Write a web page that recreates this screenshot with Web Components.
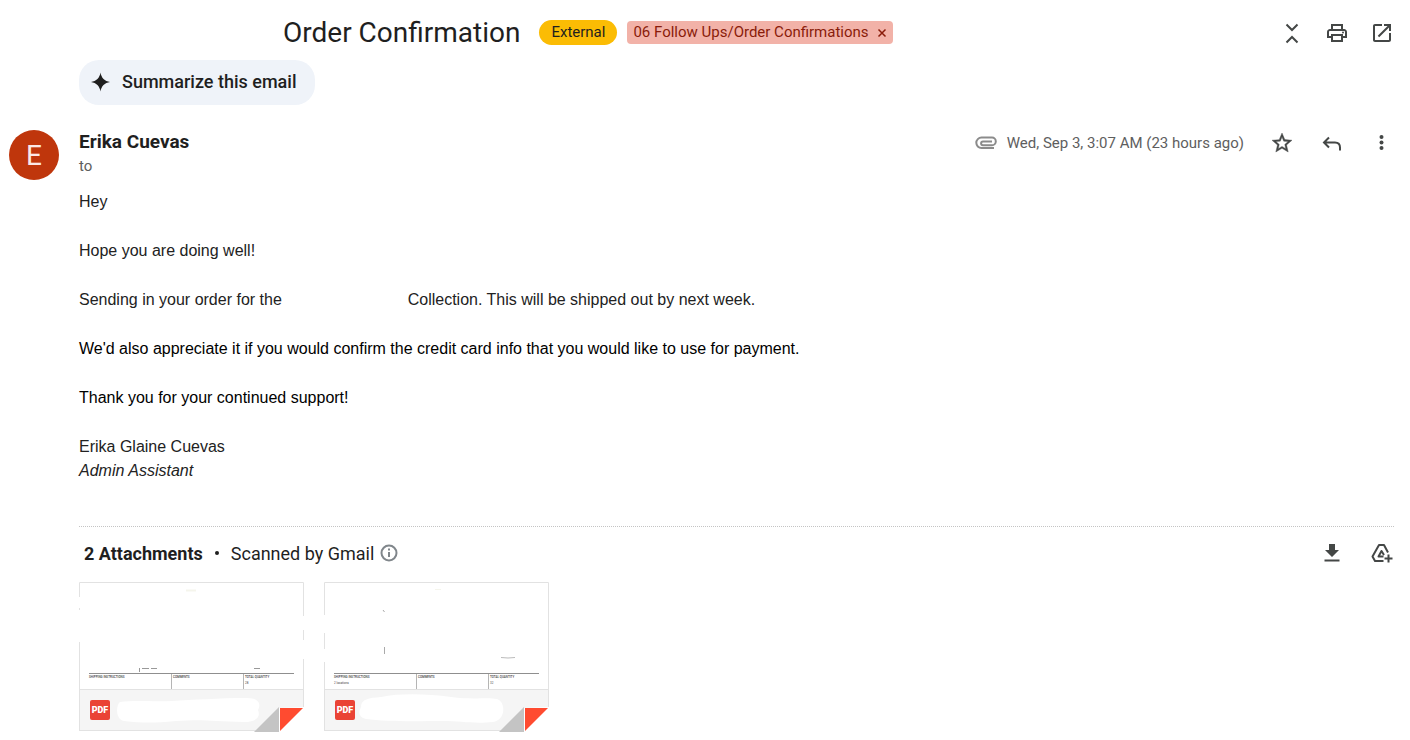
<!DOCTYPE html>
<html lang="en">
<head>
<meta charset="utf-8">
<meta name="viewport" content="width=device-width, initial-scale=1">
<title>Order Confirmation</title>
<style>
    :root {
        --text: #1f1f1f;
        --muted: #5e5e5e;
        --icon: #444746;
        --line: #e2e2e2;
    }

    body {
        margin: 0;
        background: #fff;
        color: var(--text);
        font-family: Roboto, "Liberation Sans", sans-serif;
        font-size: 16px;
    }
</style>
</head>
<body>

<mail-view>
    <mail-header slot="header">
        Order Confirmation
        <mail-tag slot="tags" kind="external">External</mail-tag>
        <mail-tag slot="tags" kind="label" removable>06 Follow Ups/Order Confirmations</mail-tag>
        <icon-button slot="actions" icon="collapse" label="Collapse all"></icon-button>
        <icon-button slot="actions" icon="print" label="Print all"></icon-button>
        <icon-button slot="actions" icon="open" label="In new window"></icon-button>
    </mail-header>

    <summary-chip slot="summary">Summarize this email</summary-chip>

    <mail-message>
        <span slot="initial">E</span>
        <span slot="sender">Erika Cuevas</span>
        <span slot="recipient">to</span>
        <span slot="date">Wed, Sep 3, 3:07 AM (23 hours ago)</span>
        <icon-button slot="actions" icon="star" label="Star"></icon-button>
        <icon-button slot="actions" icon="reply" label="Reply"></icon-button>
        <icon-button slot="actions" icon="more" label="More"></icon-button>
        <mail-body></mail-body>
    </mail-message>

    <attachment-list slot="attachments">
        <icon-button slot="actions" icon="download" label="Download all"></icon-button>
        <icon-button slot="actions" icon="drive" label="Add all to Drive"></icon-button>
        <attachment-card quantity="28" variant="first"></attachment-card>
        <attachment-card quantity="32" note="2 locations" variant="second"></attachment-card>
    </attachment-list>
</mail-view>

<script>
const icons = {
    collapse: '<path d="M6.5 3.5 12 9l5.500-5.500M6.500 21.500 12 16l5.500 5.500" fill="none" stroke="currentColor" stroke-width="2"/>',
    print: '<path d="M19 8h-1V3H6v5H5c-1.660 0-3 1.340-3 3v6h4v4h12v-4h4v-6c0-1.660-1.340-3-3-3zM8 5h8v3H8V5zm8 12v2H8v-4h8v2zm2-2v-2H6v2H4v-4c0-.55.45-1 1-1h14c.55 0 1 .45 1 1v4h-2z"/><circle cx="18" cy="11.500" r="1"/>',
    open: '<path d="M19 19H5V5h7V3H5c-1.110 0-2 .9-2 2v14c0 1.100.89 2 2 2h14c1.100 0 2-.9 2-2v-7h-2v7zM14 3v2h3.590l-9.830 9.830 1.410 1.410L19 6.410V10h2V3h-7z"/>',
    star: '<path d="M22 9.240l-7.190-.62L12 2 9.190 8.630 2 9.240l5.460 4.730L5.820 21 12 17.270 18.180 21l-1.630-7.030L22 9.240zM12 15.400l-3.760 2.270 1-4.280-3.320-2.880 4.380-.38L12 6.100l1.710 4.040 4.380.38-3.320 2.880 1 4.280L12 15.400z" stroke="currentColor" stroke-width=".4"/>',
    reply: '<path d="M9 6.500 4 11.500l5 5M4 11.500h11c3 0 5 1.800 5 5v3" fill="none" stroke="currentColor" stroke-width="2"/>',
    more: '<circle cx="11.500" cy="6" r="2"/><circle cx="11.500" cy="11.500" r="2"/><circle cx="11.500" cy="17" r="2"/>',
    download: '<path d="M9 3h6v6h4l-7 7-7-7h4zM4.500 18.500h15v2h-15z"/>',
    drive: '<path d="M13.500 20H5L2.500 15.500 9 4h5l4 7.500M13.500 15.500h-5L11.500 10l2.500 4" fill="none" stroke="currentColor" stroke-width="2" stroke-linejoin="round"/><path d="M18.500 13.500v8M14.500 17.500h8" fill="none" stroke="currentColor" stroke-width="2"/>'
}

function template(html) {
    const node = document.createElement('template')
    node.innerHTML = html
    return node
}

class BaseElement extends HTMLElement {
    constructor() {
        super()
        this.attachShadow({ mode: 'open' })
        this.shadowRoot.appendChild(this.constructor.template.content.cloneNode(true))
    }
}

class MailView extends BaseElement {
    static template = template(`
        <style>
            :host {
                display: block;
                padding: 10px 6px 8px 0;
            }

            .summary {
                margin: 5px 0 25px 79px;
            }

            .attachments {
                margin: 43px 0 0 79px;
            }
        </style>
        <slot name="header"></slot>
        <div class="summary"><slot name="summary"></slot></div>
        <main><slot></slot></main>
        <div class="attachments"><slot name="attachments"></slot></div>
    `)
}

class MailHeader extends BaseElement {
    static template = template(`
        <style>
            :host {
                display: flex;
                align-items: center;
                min-height: 45px;
                padding-left: 283px;
            }

            h1 {
                margin: 0 19px 0 0;
                font-size: 28px;
                font-weight: 400;
                line-height: 36px;
            }

            .tags {
                display: flex;
                align-items: center;
                gap: 10px;
            }

            .actions {
                display: flex;
                margin-left: auto;
            }
        </style>
        <h1><slot></slot></h1>
        <div class="tags"><slot name="tags"></slot></div>
        <div class="actions"><slot name="actions"></slot></div>
    `)
}

class MailTag extends BaseElement {
    static template = template(`
        <style>
            :host {
                display: flex;
                align-items: center;
                box-sizing: border-box;
                font-size: 15px;
                line-height: 23px;
                white-space: nowrap;
            }

            :host([kind="external"]) {
                padding: 1px 12px;
                border-radius: 13px;
                background: #fbbc04;
            }

            :host([kind="label"]) {
                padding: 0 6px;
                border-radius: 4px;
                background: #f2b2a8;
                color: #8a1c0a;
            }

            button {
                display: none;
                margin: 0 0 0 8px;
                padding: 0;
                border: 0;
                background: none;
                color: inherit;
                line-height: 0;
            }

            :host([removable]) button {
                display: block;
            }
        </style>
        <slot></slot>
        <button aria-label="Remove label">
            <svg width="10" height="10" viewBox="0 0 10 10"><path d="M1.500 1.500l7 7M8.500 1.500l-7 7" stroke="currentColor" stroke-width="1.500"/></svg>
        </button>
    `)
}

class IconButton extends BaseElement {
    static template = template(`
        <style>
            :host {
                display: block;
            }

            button {
                display: flex;
                align-items: center;
                justify-content: center;
                width: 45px;
                height: 45px;
                padding: 0;
                border: 0;
                border-radius: 50%;
                background: none;
                color: var(--icon);
                cursor: pointer;
            }

            button:hover {
                background: #f1f3f4;
            }
        </style>
        <button><svg width="24" height="24" viewBox="0 0 24 24" fill="currentColor"></svg></button>
    `)

    connectedCallback() {
        this.shadowRoot.querySelector('svg').innerHTML = icons[this.getAttribute('icon')]
        this.shadowRoot.querySelector('button').setAttribute('aria-label', this.getAttribute('label'))
    }
}

class SummaryChip extends BaseElement {
    static template = template(`
        <style>
            :host {
                display: block;
            }

            button {
                display: flex;
                align-items: center;
                gap: 12px;
                height: 45px;
                padding: 0 19px 2px 12px;
                border: 0;
                border-radius: 20px;
                background: #eff3f9;
                color: var(--text);
                font: 500 18px/24px Roboto, sans-serif;
            }
        </style>
        <button>
            <svg width="19" height="20" viewBox="0 0 20 20"><path d="M10 0c.8 5.600 4.400 9.200 10 10-5.600.8-9.200 4.400-10 10-.8-5.600-4.400-9.200-10-10 5.600-.8 9.200-4.400 10-10z" fill="currentColor"/></svg>
            <slot></slot>
        </button>
    `)
}

class MailMessage extends BaseElement {
    static template = template(`
        <style>
            :host {
                display: grid;
                grid-template-columns: 50px 1fr;
                column-gap: 20px;
                padding-left: 9px;
            }

            .avatar {
                display: flex;
                align-items: center;
                justify-content: center;
                width: 50px;
                height: 50px;
                border-radius: 50%;
                background: #bf360c;
                color: #fbe9e7;
                font-size: 28px;
            }

            .head {
                display: flex;
                height: 50px;
            }

            h2 {
                margin: 0;
                font-size: 19px;
                font-weight: 700;
                line-height: 24px;
            }

            .to {
                color: var(--muted);
                font-size: 15px;
                line-height: 25px;
            }

            .meta {
                display: flex;
                align-items: center;
                height: 25px;
                margin-left: auto;
                color: var(--muted);
                font-size: 15px;
            }

            .meta svg {
                margin-right: 10px;
            }

            .actions {
                display: flex;
                gap: 5px;
                margin-left: 15px;
            }

            .body {
                grid-column: 2;
                margin-top: 10px;
            }
        </style>
        <div class="avatar"><slot name="initial"></slot></div>
        <div class="head">
            <div>
                <h2><slot name="sender"></slot></h2>
                <div class="to"><slot name="recipient"></slot></div>
            </div>
            <div class="meta">
                <svg width="22" height="14" viewBox="0 0 22 14" fill="none" stroke="#8b8b8b" stroke-width="2"><path d="M19 12H6.500a5.200 5.200 0 0 1 0-10.400H17a3.800 3.800 0 0 1 0 7.600H8a1.900 1.900 0 0 1 0-3.800h9"/></svg>
                <slot name="date"></slot>
                <div class="actions"><slot name="actions"></slot></div>
            </div>
        </div>
        <div class="body"><slot></slot></div>
    `)
}

class MailBody extends BaseElement {
    static template = template(`
        <style>
            :host {
                display: block;
                color: #222;
                font-family: "Liberation Sans", Arial, sans-serif;
                font-size: 16px;
                line-height: 24px;
            }

            p {
                margin: 0 0 25px;
            }

            p:last-child {
                margin: 0;
            }

            .dark {
                color: #000;
            }

            .blank {
                display: inline-block;
                width: 117px;
            }
        </style>
        <p>Hey</p>
        <p>Hope you are doing well!</p>
        <p>Sending in your order for the <span class="blank"></span> Collection. This will be shipped out by next week.</p>
        <p class="dark">We'd also appreciate it if you would confirm the credit card info that you would like to use for payment.</p>
        <p class="dark">Thank you for your continued support!</p>
        <p>Erika Glaine Cuevas<br><i>Admin Assistant</i></p>
    `)
}

class AttachmentList extends BaseElement {
    static template = template(`
        <style>
            :host {
                display: block;
            }

            hr {
                margin: 0 10px 0 0;
                border: 0;
                border-top: 1px dotted #c4c4c4;
            }

            header {
                display: flex;
                align-items: center;
                height: 52px;
                padding-left: 5px;
                font-size: 18px;
            }

            h3 {
                margin: 0;
                font-size: 18px;
                font-weight: 700;
            }

            .dot {
                width: 4px;
                height: 4px;
                margin: 0 12px;
                border-radius: 50%;
                background: var(--text);
            }

            .info {
                margin-left: 6px;
            }

            .actions {
                display: flex;
                gap: 5px;
                margin-left: auto;
            }

            .cards {
                display: flex;
                flex-wrap: wrap;
                gap: 20px;
                margin-top: 3px;
            }
        </style>
        <hr>
        <header>
            <h3>2 Attachments</h3>
            <span class="dot"></span>
            <span>Scanned by Gmail</span>
            <svg class="info" width="18" height="18" viewBox="0 0 18 18" fill="none" stroke="#80868b" stroke-width="2"><circle cx="9" cy="9" r="7.500"/><path d="M9 8v5M9 4.500v2"/></svg>
            <div class="actions"><slot name="actions"></slot></div>
        </header>
        <div class="cards"><slot></slot></div>
    `)
}

// marks left on each page preview, and the open stretches of its frame
const previews = {
    first: `
        <path d="M.5 107V60M.5 26v2M.5 15V.5h224V34M224.500 48v10M224.500 77v30" stroke="#e2e2e2"/>
        <path d="M107 8.500h10" stroke="#f5f5ec" stroke-width="2"/>
        <path d="M60.500 86v4" stroke="#999"/>
        <path d="M63 86.500h7m2 0h6M175 86.500h6" stroke="#999"/>`,
    second: `
        <path d="M.5 107V80M.5 67V51M.5 33V.5h224V107" stroke="#e2e2e2"/>
        <path d="M111 7.500h6" stroke="#f5f5ec"/>
        <path d="M60.500 65v7M59 28l1.500 2" stroke="#aaa"/>
        <path d="M177 75.500q7 1 14 0" stroke="#bbb"/>`
}

const blanks = {
    first: 'M3 5C19 3 35 5 55 4s47-3 75-3c13 0 14 7 11 12 3 7-2 12-14 12-32-1-42-3-68-1-22 2-33 2-52 0C-2 22-1 8 3 5z',
    second: 'M-1 10C-1 2 7 1 19 0c20-4 47-3 70 0s36 0 46 2c9 3 9 21-4 23-20 2-31-1-51-1S25 25 4 22C-3 20-4 16-1 10z'
}

class AttachmentCard extends BaseElement {
    static template = template(`
        <style>
            :host {
                display: grid;
                grid-template-columns: 225px;
                grid-template-rows: 107px 42px;
                position: relative;
            }

            .preview {
                grid-area: 1 / 1;
            }

            .form {
                grid-area: 1 / 1;
                align-self: end;
                display: grid;
                grid-template-columns: 82px 72px 1fr;
                height: 15px;
                margin: 0 10px;
                border-top: 1px solid #8f8f8f;
                color: #444;
                font-size: 3px;
                line-height: 6px;
            }

            .form div + div {
                padding-left: 1px;
                border-left: 1px solid #b5b5b5;
            }

            .form b {
                display: block;
                font-weight: 500;
            }

            footer {
                grid-area: 2 / 1;
                display: flex;
                align-items: center;
                gap: 7px;
                padding-left: 10px;
                border: 1px solid var(--line);
                background: #f5f5f5;
            }

            .pdf {
                width: 20px;
                border-radius: 2px;
                background: #ea4335;
                color: #fff;
                font-size: 9px;
                font-weight: 900;
                line-height: 20px;
                text-align: center;
            }

            .fold {
                position: absolute;
                right: 0;
                bottom: -1px;
            }
        </style>
        <svg class="preview" width="225" height="107" viewBox="0 0 225 107" fill="none"></svg>
        <div class="form">
            <div><b>SHIPPING INSTRUCTIONS</b><span class="note"></span></div>
            <div><b>COMMENTS</b></div>
            <div><b>TOTAL QUANTITY</b><span class="quantity"></span></div>
        </div>
        <footer>
            <span class="pdf">PDF</span>
            <svg width="145" height="26" viewBox="0 0 145 26" overflow="visible"><path class="blank" fill="#fff"/></svg>
        </footer>
        <svg class="fold" width="50" height="25" viewBox="0 0 50 25">
            <path d="M50 0v25H25V1z" fill="#fff"/>
            <path d="M0 25 25 0v25z" fill="#c4c4c4"/>
            <path d="M26 1h23L26 24z" fill="#ff4b30"/>
        </svg>
    `)

    connectedCallback() {
        const root = this.shadowRoot
        const variant = this.getAttribute('variant')
        root.querySelector('.preview').innerHTML = previews[variant]
        root.querySelector('.blank').setAttribute('d', blanks[variant])
        root.querySelector('.note').textContent = this.getAttribute('note') || ''
        root.querySelector('.quantity').textContent = this.getAttribute('quantity')
    }
}

customElements.define('mail-view', MailView)
customElements.define('mail-header', MailHeader)
customElements.define('mail-tag', MailTag)
customElements.define('icon-button', IconButton)
customElements.define('summary-chip', SummaryChip)
customElements.define('mail-message', MailMessage)
customElements.define('mail-body', MailBody)
customElements.define('attachment-list', AttachmentList)
customElements.define('attachment-card', AttachmentCard)
</script>
</body>
</html>
